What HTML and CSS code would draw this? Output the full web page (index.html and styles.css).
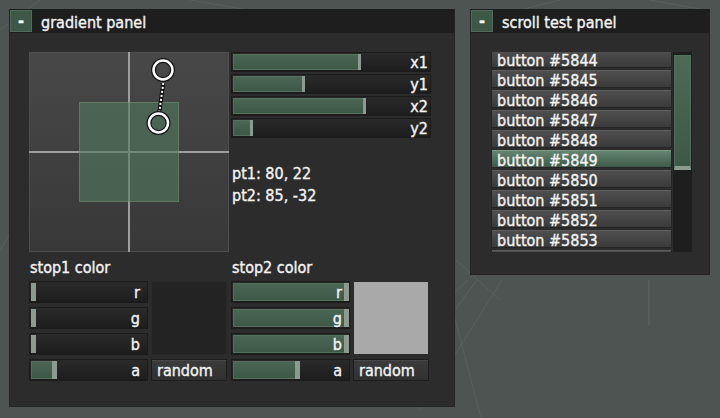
FILE: index.html
```html
<!DOCTYPE html>
<html>
<head>
<meta charset="utf-8">
<link rel="stylesheet" href="styles.css">
</head>
<body>
<svg class="bg-lines" width="720" height="418" viewBox="0 0 720 418">
  <g stroke="#59605d" stroke-width="1" fill="none">
    <line x1="0" y1="30" x2="40" y2="0"/>
    <line x1="190" y1="0" x2="260" y2="12"/>
    <line x1="560" y1="0" x2="520" y2="10"/>
    <line x1="650" y1="0" x2="700" y2="9"/>
    <line x1="455" y1="292" x2="468" y2="280"/>
    <line x1="440" y1="330" x2="477" y2="280"/>
    <line x1="420" y1="410" x2="502" y2="280"/>
    <line x1="450" y1="300" x2="481" y2="418"/>
    <line x1="456" y1="260" x2="500" y2="300"/>
    <line x1="0" y1="250" x2="9" y2="235"/>
  </g>
  <rect x="648" y="280" width="2" height="46" fill="#575e5b"/>
</svg>
<div class="desktop">
  <section class="panel panel-gradient">
    <header class="titlebar"><span class="collapse">-</span><span class="title">gradient panel</span></header>
    <div class="gp-body">
      <div class="canvas">
        <svg width="200" height="200" viewBox="0 0 200 200">
          <defs>
            <linearGradient id="cbg" x1="0" y1="0" x2="0" y2="1">
              <stop offset="0" stop-color="#484848"/>
              <stop offset="1" stop-color="#383838"/>
            </linearGradient>
          </defs>
          <rect x="0" y="0" width="200" height="200" fill="url(#cbg)"/>
          <rect x="0.5" y="0.5" width="199" height="199" fill="none" stroke="#4e4e4e"/>
          <rect x="99" y="0" width="2" height="200" fill="#9e9e9e"/>
          <rect x="0" y="99" width="200" height="2" fill="#9e9e9e"/>
          <rect x="50.5" y="50.5" width="99" height="99" fill="rgba(82,122,94,0.6)" stroke="rgba(110,150,120,0.6)"/>
          <line x1="134.3" y1="31" x2="130.3" y2="60" stroke="#111" stroke-width="4"/>
          <line x1="134.3" y1="31" x2="130.3" y2="60" stroke="#fff" stroke-width="2" stroke-dasharray="2 2"/>
          <circle cx="134" cy="18" r="9.5" fill="none" stroke="#151515" stroke-width="5"/>
          <circle cx="134" cy="18" r="9.5" fill="none" stroke="#fff" stroke-width="2.5"/>
          <circle cx="129.5" cy="71" r="9.5" fill="none" stroke="#151515" stroke-width="5"/>
          <circle cx="129.5" cy="71" r="9.5" fill="none" stroke="#fff" stroke-width="2.5"/>
        </svg>
      </div>
      <div class="right-col">
        <div class="slider-stack">
          <div class="slider s-top"><div class="fill" style="width:128px"></div><span class="lbl">x1</span></div>
          <div class="slider s-top"><div class="fill" style="width:72px"></div><span class="lbl">y1</span></div>
          <div class="slider s-top"><div class="fill" style="width:133px"></div><span class="lbl">x2</span></div>
          <div class="slider s-top"><div class="fill" style="width:20px"></div><span class="lbl">y2</span></div>
        </div>
        <div class="pts">
          <div>pt1: 80, 22</div>
          <div>pt2: 85, -32</div>
        </div>
      </div>
      <div class="stop">
        <div class="stop-label">stop1 color</div>
        <div class="stop-grid">
          <div class="slider s-bot"><div class="fill" style="width:5px"></div><span class="lbl">r</span></div>
          <div class="swatch" style="background:#232323"></div>
          <div class="slider s-bot"><div class="fill" style="width:5px"></div><span class="lbl">g</span></div>
          <div class="slider s-bot"><div class="fill" style="width:5px"></div><span class="lbl">b</span></div>
          <div class="slider s-bot"><div class="fill" style="width:26px"></div><span class="lbl">a</span></div>
          <div class="btn">random</div>
        </div>
      </div>
      <div class="stop">
        <div class="stop-label">stop2 color</div>
        <div class="stop-grid">
          <div class="slider s-bot"><div class="fill" style="width:116px"></div><span class="lbl">r</span></div>
          <div class="swatch" style="background:#a9a9a9"></div>
          <div class="slider s-bot"><div class="fill" style="width:116px"></div><span class="lbl">g</span></div>
          <div class="slider s-bot"><div class="fill" style="width:116px"></div><span class="lbl">b</span></div>
          <div class="slider s-bot"><div class="fill" style="width:67px"></div><span class="lbl">a</span></div>
          <div class="btn">random</div>
        </div>
      </div>
    </div>
  </section>

  <section class="panel panel-scroll">
    <header class="titlebar"><span class="collapse">-</span><span class="title">scroll test panel</span></header>
    <div class="sp-body">
      <div class="list-view">
        <div class="list-inner">
          <div class="row first">button #5844</div>
          <div class="row">button #5845</div>
          <div class="row">button #5846</div>
          <div class="row">button #5847</div>
          <div class="row">button #5848</div>
          <div class="row active">button #5849</div>
          <div class="row">button #5850</div>
          <div class="row">button #5851</div>
          <div class="row">button #5852</div>
          <div class="row">button #5853</div>
          <div class="row peek"></div>
        </div>
      </div>
      <div class="scrollbar"><div class="thumb"></div></div>
    </div>
  </section>
</div>
</body>
</html>
```

FILE: styles.css
```css
html, body {
  margin: 0;
  padding: 0;
}
body {
  width: 720px;
  height: 418px;
  overflow: hidden;
  background: #4d5451;
  font-family: "DejaVu Sans Condensed", "DejaVu Sans", sans-serif;
  font-stretch: condensed;
  font-size: 16px;
  color: #f4f4f4;
  -webkit-text-stroke: 0.35px #f4f4f4;
  position: relative;
}
.bg-lines {
  position: absolute;
  left: 0;
  top: 0;
}
.desktop {
  position: relative;
  display: flex;
  align-items: flex-start;
  gap: 15px;
  padding: 9px;
}
.panel {
  box-sizing: border-box;
  background: #2c2c2c;
  border: 1px solid #252525;
  border-top-color: #1e1e1e;
  display: flex;
  flex-direction: column;
}
.panel-gradient {
  width: 446px;
  height: 398px;
}
.panel-scroll {
  width: 240px;
  height: 266px;
}
.titlebar {
  height: 23px;
  background: #1e1e1e;
  display: flex;
  align-items: flex-start;
}
.collapse {
  box-sizing: border-box;
  width: 22px;
  height: 22px;
  background: #3d5846;
  border: 1px solid #506b59;
  color: #fff;
  font-weight: bold;
  text-align: center;
  line-height: 19px;
  font-size: 16px;
}
.title {
  margin-left: 9px;
  padding-top: 1px;
  line-height: 23px;
  white-space: nowrap;
}

/* gradient panel */
.gp-body {
  display: grid;
  grid-template-columns: 200px 200px;
  grid-template-rows: 200px auto;
  column-gap: 2px;
  padding: 19px 0 0 19px;
}
.canvas {
  width: 200px;
  height: 200px;
}
.canvas svg {
  display: block;
}
.slider-stack {
  display: flex;
  flex-direction: column;
  gap: 2px;
}
.slider {
  box-sizing: border-box;
  position: relative;
  border: 1px solid #1b1b1b;
  background: linear-gradient(#2a2a2a, #1d1d1d);
  padding: 1px;
  display: flex;
  align-items: stretch;
}
.fill {
  box-sizing: border-box;
  height: 100%;
  background: linear-gradient(#4b6654, #3e5848);
  border: 1px solid #53705d;
  border-right: none;
  position: relative;
  flex: none;
}
.fill::after {
  content: "";
  position: absolute;
  right: 0;
  top: -1px;
  bottom: -1px;
  background: #8d9a90;
}
.s-top {
  height: 20px;
}
.s-top .fill::after {
  width: 3px;
}
.s-bot {
  height: 22px;
}
.s-bot .fill::after {
  width: 5px;
}
.lbl {
  position: absolute;
  right: 2px;
  top: 0;
  line-height: 19px;
}
.s-bot .lbl {
  right: 7px;
  line-height: 21px;
}
.pts {
  margin-top: 25px;
  line-height: 22px;
  padding-left: 1px;
}
.stop {
  grid-row: 2;
}
.stop-label {
  margin-top: 5px;
  line-height: 22px;
  padding-left: 1px;
}
.stop-grid {
  margin-top: 2px;
  display: grid;
  grid-template-columns: 119px 76px;
  grid-auto-rows: 22px;
  column-gap: 3px;
  row-gap: 4px;
}
.swatch {
  grid-column: 2;
  grid-row: 1 / 4;
  box-sizing: border-box;
  border: 1px solid #2a2a2a;
}
.btn {
  box-sizing: border-box;
  border: 1px solid #1c1c1c;
  background: linear-gradient(#3c3c3c, #303030);
  box-shadow: inset 0 1px #484848;
  padding-left: 5px;
  padding-top: 1px;
  line-height: 20px;
}

/* scroll panel */
.sp-body {
  display: flex;
  gap: 1px;
  padding: 19px 0 0 20px;
}
.list-view {
  width: 181px;
  height: 200px;
  overflow: hidden;
}
.list-inner {
  display: flex;
  flex-direction: column;
  gap: 2px;
}
.row {
  box-sizing: border-box;
  height: 18px;
  flex: none;
  border: 1px solid #252525;
  border-top: none;
  background: linear-gradient(#505050, #3a3a3a);
  box-shadow: inset 0 1px #5c5c5c;
  padding-left: 5px;
  padding-top: 2px;
  line-height: 18px;
  white-space: nowrap;
}
.row.first {
  height: 16px;
  padding-top: 0;
  box-shadow: none;
  background: linear-gradient(#4d4d4d, #3a3a3a);
}
.row.active {
  background: linear-gradient(#678774, #3e5a48);
  box-shadow: inset 0 1px #7a9a86;
}
.scrollbar {
  box-sizing: border-box;
  width: 19px;
  height: 200px;
  background: #1e1e1e;
  padding: 3px 1px 0 1px;
}
.thumb {
  box-sizing: border-box;
  height: 115px;
  background: linear-gradient(#4c6b57, #3d5846);
  border: 1px solid #54705e;
  border-bottom: 4px solid #8d9a90;
}
```
